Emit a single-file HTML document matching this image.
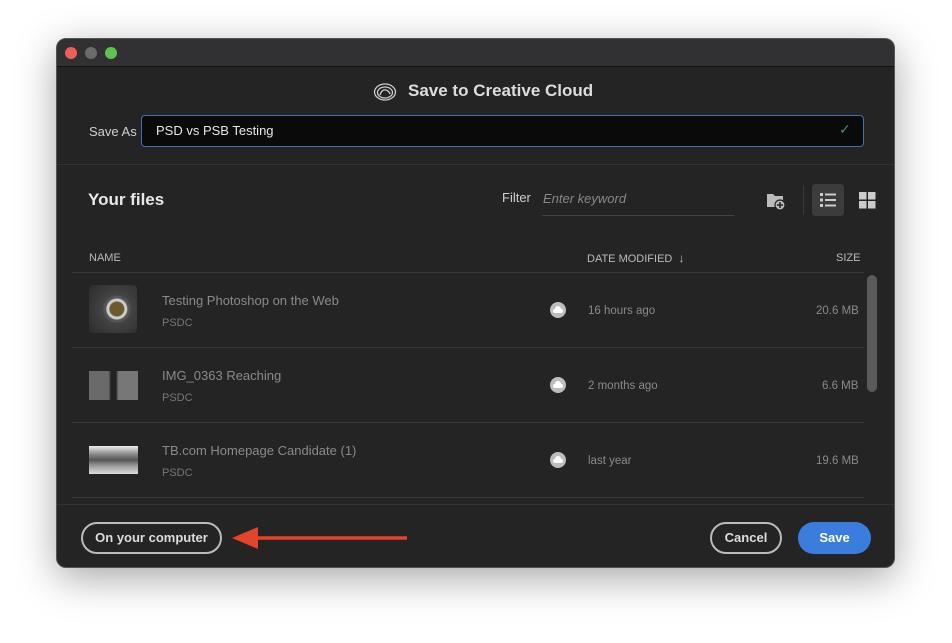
<!DOCTYPE html>
<html><head><meta charset="utf-8"><style>
*{margin:0;padding:0;box-sizing:border-box}
body{width:952px;height:643px;background:#fff;font-family:"Liberation Sans",sans-serif;position:relative;overflow:hidden}
.win{position:absolute;left:56px;top:38px;width:839px;height:530px;background:#242424;border-radius:10px;overflow:hidden;box-shadow:0 10px 40px rgba(0,0,0,.35);border:1px solid #555}
.tb{position:absolute;left:0;top:0;width:100%;height:28px;background:#313133;border-bottom:1px solid #111}
.dot{position:absolute;top:8px;width:12px;height:12px;border-radius:50%}
.a{position:absolute;white-space:nowrap}
.line{position:absolute;height:1px;background:#3a3a3a}
.row .t{color:#8a8a8a;font-size:13px}
.row .s{color:#777;font-size:11px}
.g{color:#8a8a8a;font-size:11.5px}
.cl{position:absolute;width:16px;height:16px;border-radius:50%;background:#bdbdbd}
.cl::after{content:"";position:absolute;left:3px;top:7px;width:10px;height:4px;background:#fff;border-radius:2px}
.cl::before{content:"";position:absolute;left:5px;top:4px;width:6px;height:6px;background:#fff;border-radius:50%}
</style></head><body>
<div class="win">
<div class="tb">
<div class="dot" style="left:8px;background:#ee5f57"></div>
<div class="dot" style="left:28px;background:#6b6b6b"></div>
<div class="dot" style="left:48px;background:#5fc14f"></div>
</div>
<svg class="a" style="left:316px;top:43px" width="24" height="20" viewBox="0 0 24 20" fill="none" stroke="#ccc" stroke-width="1.3"><ellipse cx="12" cy="10" rx="10.5" ry="8"/><ellipse cx="12" cy="10.5" rx="7.5" ry="5.5"/><path d="M7 13 q2-6 6-5 q3 1 4 4"/></svg>
<div class="a" style="left:351px;top:42px;color:#ddd;font-size:17px;font-weight:bold">Save to Creative Cloud</div>
<div class="a" style="left:32px;top:85px;color:#cfcfcf;font-size:13px">Save As</div>
<div class="a" style="left:84px;top:76px;width:723px;height:32px;background:#0a0a0a;border:1.5px solid #3f6fb5;border-radius:4px"></div>
<div class="a" style="left:99px;top:84px;color:#e6e6e6;font-size:13px">PSD vs PSB Testing</div>
<div class="a" style="left:782px;top:82px;color:#4e8a6a;font-size:14px">✓</div>
<div class="line" style="left:0;top:125px;width:839px;background:#333"></div>
<div class="a" style="left:31px;top:151px;color:#e8e8e8;font-size:17px;font-weight:bold">Your files</div>
<div class="a" style="left:445px;top:151px;color:#cfcfcf;font-size:13px">Filter</div>
<div class="a" style="left:486px;top:152px;color:#888;font-size:13px;font-style:italic">Enter keyword</div>
<div class="line" style="left:485px;top:176px;width:192px;background:#444"></div>
<svg class="a" style="left:709px;top:152px" width="20" height="20" viewBox="0 0 20 20"><path d="M1 3h6l2 2h8v11H1z" fill="#bbb"/><circle cx="14" cy="14" r="5" fill="#bbb" stroke="#242424" stroke-width="1.2"/><path d="M14 11v6M11 14h6" stroke="#242424" stroke-width="1.5"/></svg>
<div class="line" style="left:746px;top:146px;width:1px;height:30px;background:#3a3a3a"></div>
<div class="a" style="left:755px;top:145px;width:32px;height:32px;background:#3c3c3c;border-radius:4px"></div>
<svg class="a" style="left:762px;top:152px" width="18" height="18" viewBox="0 0 18 18" fill="#ccc"><rect x="1" y="2" width="3" height="3"/><rect x="6" y="2.5" width="11" height="2"/><rect x="1" y="7.5" width="3" height="3"/><rect x="6" y="8" width="11" height="2"/><rect x="1" y="13" width="3" height="3"/><rect x="6" y="13.5" width="11" height="2"/></svg>
<svg class="a" style="left:802px;top:153px" width="17" height="17" viewBox="0 0 17 17" fill="#ccc"><rect x="0" y="0" width="7.5" height="7.5"/><rect x="9" y="0" width="7.5" height="7.5"/><rect x="0" y="9" width="7.5" height="7.5"/><rect x="9" y="9" width="7.5" height="7.5"/></svg>
<div class="a g" style="left:32px;top:212px;color:#bbb;font-size:11px;line-height:14px">NAME</div>
<div class="a g" style="left:530px;top:212px;color:#bbb;font-size:11px;line-height:14px">DATE MODIFIED &nbsp;<b style="font-size:12px">↓</b></div>
<div class="a g" style="left:779px;top:212px;color:#bbb;font-size:11px;line-height:14px">SIZE</div>
<div class="line" style="left:15px;top:233px;width:792px"></div>
<div class="a" style="left:810px;top:236px;width:10px;height:117px;background:#5a5a5a;border-radius:5px"></div>
<div class="row">
<div class="a" style="left:32px;top:246px;width:48px;height:48px;border-radius:4px;background:radial-gradient(circle at 58% 50%,#6b5a2a 0 7px,#ccc 8px 10px,#555 11px 13px,#444 14px,#2e2e2e 34px)"></div>
<div class="a t" style="left:105px;top:254px">Testing Photoshop on the Web</div>
<div class="a s" style="left:105px;top:278px">PSDC</div>
<div class="cl" style="left:493px;top:263px"></div>
<div class="a g" style="left:531px;top:266px">16 hours ago</div>
<div class="a g" style="left:759px;top:266px">20.6 MB</div>
</div>
<div class="line" style="left:15px;top:308px;width:792px"></div>
<div class="row">
<div class="a" style="left:32px;top:332px;width:49px;height:29px;background:linear-gradient(90deg,#6a6a6a 0 40%,#222 45% 55%,#777 60%)"></div>
<div class="a t" style="left:105px;top:329px">IMG_0363 Reaching</div>
<div class="a s" style="left:105px;top:353px">PSDC</div>
<div class="cl" style="left:493px;top:338px"></div>
<div class="a g" style="left:531px;top:341px">2 months ago</div>
<div class="a g" style="left:765px;top:341px">6.6 MB</div>
</div>
<div class="line" style="left:15px;top:383px;width:792px"></div>
<div class="row">
<div class="a" style="left:32px;top:407px;width:49px;height:28px;background:linear-gradient(180deg,#eee 0,#888 30%,#555 50%,#999 70%,#ddd)"></div>
<div class="a t" style="left:105px;top:404px">TB.com Homepage Candidate (1)</div>
<div class="a s" style="left:105px;top:428px">PSDC</div>
<div class="cl" style="left:493px;top:413px"></div>
<div class="a g" style="left:531px;top:416px">last year</div>
<div class="a g" style="left:759px;top:416px">19.6 MB</div>
</div>
<div class="line" style="left:15px;top:458px;width:792px"></div>
<div class="line" style="left:0;top:465px;width:839px;background:#333"></div>
<div class="a" style="left:24px;top:483px;width:141px;height:32px;border:2px solid #bbb;border-radius:16px;color:#ddd;font-size:13px;font-weight:bold;text-align:center;line-height:28px">On your computer</div>
<div class="a" style="left:653px;top:483px;width:72px;height:32px;border:2px solid #bbb;border-radius:16px;color:#ddd;font-size:13px;font-weight:bold;text-align:center;line-height:28px">Cancel</div>
<div class="a" style="left:741px;top:483px;width:73px;height:32px;background:#3b7ddd;border-radius:16px;color:#fff;font-size:13px;font-weight:bold;text-align:center;line-height:32px">Save</div>
</div>
<svg class="a" style="left:232px;top:526px" width="176" height="24" viewBox="0 0 176 24"><path d="M20 12H175" stroke="#e2452c" stroke-width="3.5"/><path d="M0 12L26 1V23Z" fill="#e2452c"/></svg>
</body></html>
